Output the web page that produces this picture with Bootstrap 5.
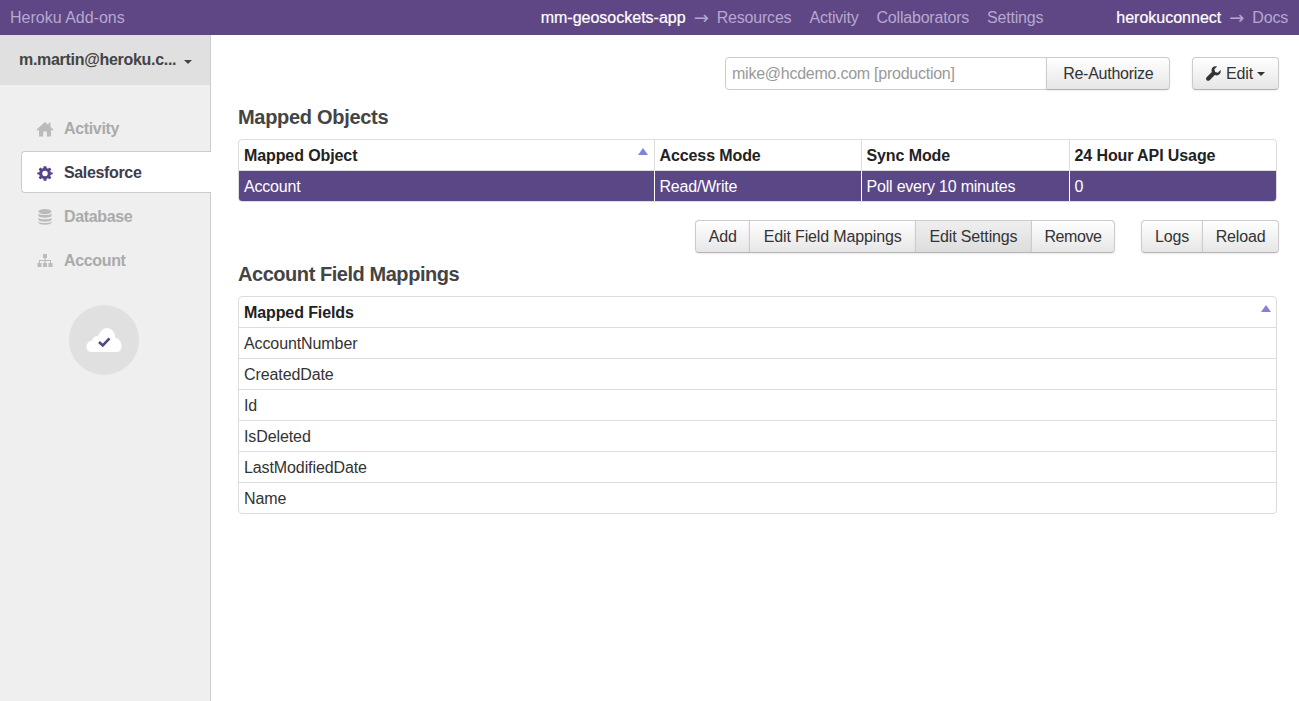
<!DOCTYPE html>
<html lang="en">
<head>
  <meta charset="UTF-8">
  <meta name="viewport" content="width=device-width, initial-scale=1.0">
  <title>Heroku Connect</title>
  <link href="https://cdn.jsdelivr.net/npm/bootstrap@5.3.0/dist/css/bootstrap.min.css" rel="stylesheet">
  <style>
    body {
      font-family: "Liberation Sans", Arial, sans-serif;
      font-size: 16px;
      color: #333;
      height: 701px;
      overflow: hidden;
    }
    .topbar {
      height: 35px;
      background: #5f4786;
      color: #b6a8cf;
      padding: 0 11px 0 10px;
    }
    .topbar a { color: #b6a8cf; text-decoration: none; }
    .topbar b { color: #fff; font-weight: 400; -webkit-text-stroke: 0.2px #fff; letter-spacing: 0; }
    .topmid, .topright { letter-spacing: -0.2px; }
    .topmid { margin-right: 73px; gap: 18px; }
    .arrow {
      font-family: "DejaVu Sans", sans-serif;
      font-size: 18px;
      line-height: 1;
      margin: 0 8px;
      letter-spacing: 0;
    }
    .shell { height: 666px; }
    .sidebar {
      width: 211px;
      background: #efefef;
      border-right: 1px solid #ccc;
      flex-shrink: 0;
    }
    .acct {
      height: 50px;
      background: #e0e0e0;
      padding: 0 18px 0 19px;
      font-weight: 700;
      color: #444;
      letter-spacing: -0.3px;
    }
    .acct-caret {
      border-top: 4px solid #444;
      border-left: 4px solid transparent;
      border-right: 4px solid transparent;
      margin-top: 3px;
    }
    .sidenav { padding: 22px 0 0 21px; margin-right: -1px; }
    .sidelink {
      height: 42px;
      margin-bottom: 2px;
      padding: 2px 0 0 14px;
      color: #aaa;
      font-weight: 700;
      text-decoration: none;
      border: 1px solid transparent;
      border-right: 0;
      border-radius: 4px 0 0 4px;
      letter-spacing: -0.35px;
    }
    .sidelink:hover { color: #aaa; }
    .sidelink svg { width: 18px; height: 18px; margin-right: 10px; fill: #bbb; }
    .sidelink.current { background: #fff; border-color: #ccc; color: #3d3d4d; }
    .sidelink.current svg { fill: #574587; }
    .status {
      width: 70px;
      height: 70px;
      background: #e0e0e0;
      margin: 24px 0 0 69px;
    }
    .content { padding: 22px 20px 0 27px; min-width: 0; }
    .acct-input { width: 445px; }
    .acct-input .form-control {
      height: 33px;
      padding: 0 6px;
      font-size: 16px;
      color: #999;
      background: #fff;
      border-color: #ccc;
      border-radius: 4px 0 0 4px;
      letter-spacing: -0.25px;
    }
    .btn-plain {
      height: 33px;
      padding: 0 13px;
      font-size: 16px;
      color: #333;
      background: linear-gradient(#fff, #e6e6e6);
      border: 1px solid #ccc;
      border-bottom-color: #b3b3b3;
      border-radius: 4px;
      box-shadow: 0 1px 2px rgba(0, 0, 0, .08);
      letter-spacing: -0.15px;
    }
    .btn-plain:hover { color: #333; border-color: #ccc; }
    .btn-plain.on { background: linear-gradient(#efefef, #ddd); }
    .btn-plain.reauth { padding: 0 15.5px 0 16px; letter-spacing: -0.25px; }
    .btn-plain.snug { padding: 0 12.5px; }
    .btn-plain.roomy { padding: 0 13.5px; }
    .btn-plain.tight { letter-spacing: -0.4px; }
    .edit-btn { margin-left: 22px; }
    .edit-btn svg { width: 15px; height: 15px; fill: #333; margin-right: 5px; vertical-align: -2px; }
    .edit-caret {
      display: inline-block;
      border-top: 4px solid #333;
      border-left: 4px solid transparent;
      border-right: 4px solid transparent;
      margin-left: 4px;
      vertical-align: 3px;
    }
    .section-title {
      font-size: 20px;
      line-height: 24px;
      font-weight: 700;
      color: #444;
      margin: 15px 0 10px;
      letter-spacing: -0.3px;
    }
    .section-title.second { margin-top: 9px; letter-spacing: -0.45px; }
    .table-box {
      border: 1px solid #ddd;
      border-radius: 4px;
      overflow: hidden;
      margin-right: 2px;
    }
    .map-table { table-layout: fixed; margin: 0; width: 100%; }
    .map-table th, .map-table td {
      height: 31px;
      padding: 2px 5px 0;
      border-top: 1px solid #ddd;
      border-bottom: 0;
      vertical-align: middle;
      font-size: 16px;
      color: #333;
      letter-spacing: -0.1px;
      box-shadow: none;
    }
    .map-table th { color: #222; height: 30px; }
    .map-table tr:first-child th { border-top: 0; }
    .map-table th + th, .map-table td + td { border-left: 1px solid #ddd; }
    .map-table tr.picked td {
      background: #5a4786;
      color: #fff;
      border-top-color: #ddd;
      letter-spacing: -0.2px;
    }
    .map-table tr.picked td + td { border-left-color: #fff; }
    .sort-up {
      position: absolute;
      top: 8px;
      right: 6px;
      border-bottom: 7px solid #8480e0;
      border-left: 5px solid transparent;
      border-right: 5px solid transparent;
    }
    .sort-up.far { right: 5px; }
    .actions { margin-top: 18px; }
    .actions .btn-group + .btn-group { margin-left: 26px; }
    .col-main { width: 415px; }
    .col-mid { width: 207px; }
    .col-mid2 { width: 208px; }
  </style>
</head>
<body>
  <div class="topbar d-flex align-items-center">
    <a href="#">Heroku Add-ons</a>
    <div class="topmid ms-auto d-flex align-items-center">
      <span class="d-flex align-items-center"><b>mm-geosockets-app</b><span class="arrow">&rarr;</span><a href="#">Resources</a></span>
      <a href="#">Activity</a>
      <a href="#">Collaborators</a>
      <a href="#">Settings</a>
    </div>
    <div class="topright d-flex align-items-center"><b>herokuconnect</b><span class="arrow">&rarr;</span><a href="#">Docs</a></div>
  </div>

  <div class="shell d-flex">
    <div class="sidebar">
      <div class="acct d-flex align-items-center justify-content-between">
        <span>m.martin@heroku.c...</span>
        <span class="acct-caret"></span>
      </div>
      <nav class="sidenav">
        <a class="sidelink d-flex align-items-center" href="#">
          <svg viewBox="0 0 18 18"><path d="M9 2 0.5 9.600 1.600 10.800 3 9.600V16.500H7.200V11.500H10.800V16.500H15V9.600L16.400 10.800 17.500 9.600 14.500 6.900V2.800H12.400V5L9 2Z"/></svg>Activity
        </a>
        <a class="sidelink current d-flex align-items-center" href="#">
          <svg viewBox="-1.500 -1.500 21 21"><path fill-rule="evenodd" d="M7.400 1H10.600L11 3.300 12.400 3.900 14.400 2.600 16.400 4.600 15.100 6.600 15.700 8 18 8.400V10.600L15.700 11 15.100 12.400 16.400 14.400 14.400 16.400 12.400 15.100 11 15.700 10.600 18H7.400L7 15.700 5.600 15.100 3.600 16.400 1.600 14.400 2.900 12.400 2.300 11 0 10.600V8.400L2.300 8 2.900 6.600 1.600 4.600 3.600 2.600 5.600 3.900 7 3.300ZM9 6.300A3.200 3.200 0 1 0 9 12.700 3.200 3.200 0 1 0 9 6.300Z"/></svg>Salesforce
        </a>
        <a class="sidelink d-flex align-items-center" href="#">
          <svg viewBox="0 0 18 18"><ellipse cx="9" cy="3.600" rx="6.500" ry="2.600"/><path d="M2.500 5.600C3.500 7.600 14.500 7.600 15.500 5.600V8C14.500 10.200 3.500 10.200 2.500 8ZM2.500 9.800C3.500 11.800 14.500 11.800 15.500 9.800V12C14.500 14.200 3.500 14.200 2.500 12ZM2.500 13.600C3.500 15.600 14.500 15.600 15.500 13.600V14.800C14.500 17.400 3.500 17.400 2.500 14.800Z"/></svg>Database
        </a>
        <a class="sidelink d-flex align-items-center" href="#">
          <svg viewBox="0 0 18 18"><path d="M7 2H11V6H9.600V8H15V11H16.500V15H12.500V11H14V9H9.600V11H11V15H7V11H8.400V9H4V11H5.500V15H1.500V11H3V8H8.400V6H7Z"/></svg>Account
        </a>
      </nav>
      <div class="status rounded-circle d-flex align-items-center justify-content-center">
        <svg width="36" height="26" viewBox="0 0 36 26">
          <path fill="#fff" d="M5 25C2.500 25 .5 22.500 .5 19.500 .5 16.500 3 14 6 13.800 6.600 10.500 9.400 8.600 12 9 14 4 17.500 1 21 1 25.800 1 29 5.500 29.200 10.500 33 11.500 35.500 15 35.500 19 35.500 22.500 33.500 25 31 25Z"/>
          <path fill="none" stroke="#574587" stroke-width="2.600" d="M13 15 16.800 18.500 23.500 11.300"/>
        </svg>
      </div>
    </div>

    <main class="content flex-grow-1">
      <div class="d-flex justify-content-end">
        <div class="input-group flex-nowrap acct-input">
          <input class="form-control" type="text" value="mike@hcdemo.com [production]" readonly>
          <button class="btn btn-plain reauth" type="button">Re-Authorize</button>
        </div>
        <button class="btn btn-plain edit-btn" type="button">
          <svg viewBox="0 0 16 16"><path d="M15.500 4.300 12.600 7.200 9.800 6.300 8.900 3.500 11.800 .6C9.500 -.2 7.200 .8 6.300 2.700 5.700 4 5.800 5.300 6.200 6.400L.7 11.900C-.2 12.800 -.2 14.200.7 15.100 1.600 16 3 16 3.900 15.100L9.400 9.600C10.500 10.100 11.900 10.200 13.200 9.600 15.200 8.700 16.200 6.500 15.500 4.300Z"/></svg>Edit<span class="edit-caret"></span>
        </button>
      </div>

      <h2 class="section-title">Mapped Objects</h2>
      <div class="table-box">
        <table class="table map-table">
          <colgroup><col class="col-main"><col class="col-mid"><col class="col-mid2"><col></colgroup>
          <thead>
            <tr>
              <th class="position-relative">Mapped Object<span class="sort-up"></span></th>
              <th>Access Mode</th>
              <th>Sync Mode</th>
              <th>24 Hour API Usage</th>
            </tr>
          </thead>
          <tbody>
            <tr class="picked">
              <td>Account</td>
              <td>Read/Write</td>
              <td>Poll every 10 minutes</td>
              <td>0</td>
            </tr>
          </tbody>
        </table>
      </div>

      <div class="actions d-flex justify-content-end">
        <div class="btn-group">
          <button class="btn btn-plain snug" type="button">Add</button>
          <button class="btn btn-plain roomy" type="button">Edit Field Mappings</button>
          <button class="btn btn-plain roomy on" type="button">Edit Settings</button>
          <button class="btn btn-plain snug tight" type="button">Remove</button>
        </div>
        <div class="btn-group">
          <button class="btn btn-plain" type="button">Logs</button>
          <button class="btn btn-plain snug" type="button">Reload</button>
        </div>
      </div>

      <h2 class="section-title second">Account Field Mappings</h2>
      <div class="table-box">
        <table class="table map-table">
          <thead>
            <tr><th class="position-relative">Mapped Fields<span class="sort-up far"></span></th></tr>
          </thead>
          <tbody>
            <tr><td>AccountNumber</td></tr>
            <tr><td>CreatedDate</td></tr>
            <tr><td>Id</td></tr>
            <tr><td>IsDeleted</td></tr>
            <tr><td>LastModifiedDate</td></tr>
            <tr><td>Name</td></tr>
          </tbody>
        </table>
      </div>
    </main>
  </div>

  <script src="https://cdn.jsdelivr.net/npm/bootstrap@5.3.0/dist/js/bootstrap.bundle.min.js"></script>
</body>
</html>
